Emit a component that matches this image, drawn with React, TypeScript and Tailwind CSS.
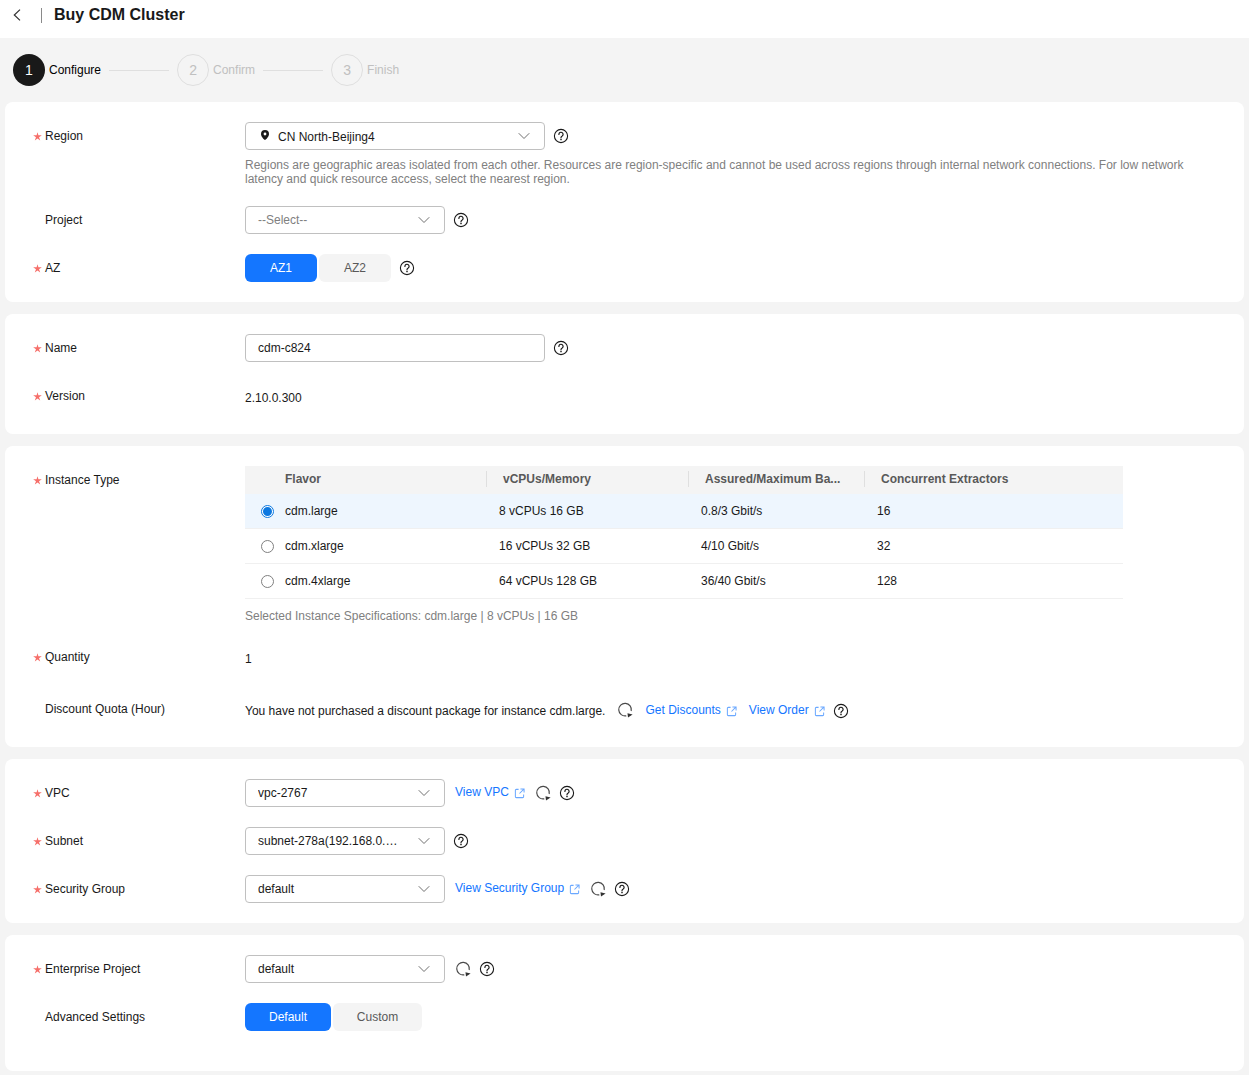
import type { ReactNode } from 'react';
import { ChevronDown } from 'lucide-react';

function Star() {
  return (
    <svg viewBox="0 0 10 10" className="mt-px h-[9px] w-[9px]" aria-hidden="true">
      <path d="M5 .2 6 3.700l3.800-.1-3.100 2.100 1.300 3.700L5 7.100 2 9.400l1.300-3.700L.2 3.600 4 3.700z" fill="#f66f6a" />
    </svg>
  );
}

function Help() {
  return (
    <svg viewBox="0 0 16 16" className="h-4 w-4 shrink-0" aria-hidden="true">
      <circle cx="8" cy="8" r="6.6" fill="none" stroke="#191919" strokeWidth="1.100" />
      <path d="M5.900 6.400a2.100 2.100 0 1 1 3.300 1.700c-.8.500-1.200.9-1.200 1.700" fill="none" stroke="#191919" strokeWidth="1.200" strokeLinecap="round" />
      <circle cx="8" cy="11.600" r=".8" fill="#191919" />
    </svg>
  );
}

function Refresh() {
  return (
    <svg viewBox="0 0 16 16" className="h-4 w-4 shrink-0" aria-hidden="true">
      <path d="M14.200 9A6.300 6.300 0 1 0 9.300 13.800" fill="none" stroke="#4a4a4a" strokeWidth="1.200" />
      <path d="M10.500 11.300 15.600 12.400 11 15.400z" fill="#333" />
    </svg>
  );
}

function ExternalIcon() {
  return (
    <svg viewBox="0 0 12 12" className="ml-[5px] mt-[2px] h-[11px] w-[11px] shrink-0" aria-hidden="true">
      <path d="M5 1.500H2.500a1 1 0 0 0-1 1v7a1 1 0 0 0 1 1h7a1 1 0 0 0 1-1V7M7 1h4v4M11 1 6 6" fill="none" stroke="#6aa8ff" strokeWidth="1.100" />
    </svg>
  );
}

function Pin() {
  return (
    <svg viewBox="0 0 12 12" className="h-3 w-3 shrink-0" aria-hidden="true">
      <path fillRule="evenodd" d="M6 1a4 4 0 0 0-4 4c0 2.500 3 5.700 4 6 1-.3 4-3.500 4-6a4 4 0 0 0-4-4zm0 2.600a1.400 1.400 0 1 1 0 2.800 1.400 1.400 0 0 1 0-2.800z" fill="#191919" />
    </svg>
  );
}

function Card({ children, className }: { children: ReactNode; className: string }) {
  return <section className={`mx-[5px] mb-3 rounded-lg bg-white pl-7 ${className}`}>{children}</section>;
}

function Row({ label, required, children, className = '', labelClass = 'pt-[6px]' }: { label: string; required?: boolean; children: ReactNode; className?: string; labelClass?: string }) {
  return (
    <div className={`flex ${className}`}>
      <div className={`flex h-fit w-[212px] shrink-0 items-center ${labelClass}`}>
        <span className="flex w-3 justify-start">{required && <Star />}</span>
        <span className="text-[#191919]">{label}</span>
      </div>
      <div className="min-w-0 flex-1">{children}</div>
    </div>
  );
}

function Select({ value, wide, muted, pin }: { value: string; wide?: boolean; muted?: boolean; pin?: boolean }) {
  return (
    <div className={`flex h-7 shrink-0 items-center rounded border border-[#c0c0c0] bg-white pr-[10px] ${wide ? 'w-[300px] pl-[13px]' : 'w-[200px] pl-3'}`}>
      {pin && <span className="mb-[2px] mr-[7px]"><Pin /></span>}
      <span className={`flex-1 truncate ${pin ? 'pt-[2px]' : ''} ${muted ? 'text-[#808080]' : 'text-[#191919]'}`}>{value}</span>
      <ChevronDown className="ml-[10px] h-5 w-5 shrink-0 text-[#707070]" strokeWidth={1.200} />
    </div>
  );
}

function Segment({ options, widths }: { options: string[]; widths: string[] }) {
  return (
    <div className="flex gap-[2px]">
      {options.map((option, i) => (
        <div key={option} className={`flex h-7 items-center justify-center rounded-md ${widths[i]} ${i === 0 ? 'bg-[#1476ff] text-white' : 'bg-[#f4f4f4] text-[#595959]'}`}>
          {option}
        </div>
      ))}
    </div>
  );
}

function Ext({ children, className = '' }: { children: ReactNode; className?: string }) {
  return (
    <span className={`flex items-center pb-[2px] text-[#1476ff] ${className}`}>
      {children}
      <ExternalIcon />
    </span>
  );
}

const steps = [
  { n: '1', label: 'Configure', active: true },
  { n: '2', label: 'Confirm' },
  { n: '3', label: 'Finish' },
];

const flavors = [
  ['cdm.large', '8 vCPUs 16 GB', '0.8/3 Gbit/s', '16'],
  ['cdm.xlarge', '16 vCPUs 32 GB', '4/10 Gbit/s', '32'],
  ['cdm.4xlarge', '64 vCPUs 128 GB', '36/40 Gbit/s', '128'],
];

export default function App() {
  return (
    <div className="min-h-screen bg-[#f4f4f4] font-['Liberation_Sans',Arial,sans-serif] text-xs">
      <header className="flex h-[38px] items-center bg-white pb-2 pl-[13px]">
        <svg viewBox="0 0 8 12" className="h-3 w-2" aria-hidden="true">
          <path d="M7 .6 1.300 6 7 11.400" fill="none" stroke="#333" strokeWidth="1.200" />
        </svg>
        <span className="ml-5 h-[15px] w-px bg-[#8a8a8a]" />
        <h1 className="ml-3 text-base font-bold text-[#191919]">Buy CDM Cluster</h1>
      </header>

      <div className="flex h-16 items-center pl-[13px]">
        {steps.map((step, i) => (
          <div key={step.n} className="flex items-center">
            <span className={`flex h-8 w-8 items-center justify-center rounded-full text-sm ${step.active ? 'bg-[#191919] text-white' : 'border border-[#dfdfdf] text-[#c0c0c0]'}`}>{step.n}</span>
            <span className={`ml-1 ${step.active ? 'text-black' : 'text-[#c0c0c0]'}`}>{step.label}</span>
            {i < 2 && <span className="mx-2 h-px w-[60px] bg-[#dfdfdf]" />}
          </div>
        ))}
      </div>

      <Card className="h-[200px] pt-5">
        <Row label="Region" required>
          <div className="flex items-center gap-2">
            <Select value="CN North-Beijing4" wide pin />
            <Help />
          </div>
          <p className="mt-2 w-[960px] leading-[14px] text-[#808080]">
            Regions are geographic areas isolated from each other. Resources are region-specific and cannot be used across regions through internal network connections. For low network latency and quick resource access, select the nearest region.
          </p>
        </Row>
        <Row label="Project" className="mt-5">
          <div className="flex items-center gap-2">
            <Select value="--Select--" muted />
            <Help />
          </div>
        </Row>
        <Row label="AZ" required className="mt-5">
          <div className="flex items-center gap-2">
            <Segment options={['AZ1', 'AZ2']} widths={['w-[72px]', 'w-[72px]']} />
            <Help />
          </div>
        </Row>
      </Card>

      <Card className="h-[120px] pt-5">
        <Row label="Name" required>
          <div className="flex items-center gap-2">
            <div className="flex h-7 w-[300px] items-center rounded border border-[#c0c0c0] pl-3 text-[#191919]">cdm-c824</div>
            <Help />
          </div>
        </Row>
        <Row label="Version" required className="mt-5">
          <div className="flex h-7 items-center pt-[3px] text-[#191919]">2.10.0.300</div>
        </Row>
      </Card>

      <Card className="h-[301px] pt-5">
        <Row label="Instance Type" required>
          <div className="w-[878px]">
            <div className="grid h-7 grid-cols-[40px_201px_202px_176px_1fr] items-center bg-[#f4f4f4] pb-[2px] font-bold text-[#595959]">
              <span />
              <span className="truncate">Flavor</span>
              <span className="flex h-4 items-center border-l border-[#dfdfdf] pl-4">vCPUs/Memory</span>
              <span className="flex h-4 items-center border-l border-[#dfdfdf] pl-4">Assured/Maximum Ba...</span>
              <span className="flex h-4 items-center border-l border-[#dfdfdf] pl-4">Concurrent Extractors</span>
            </div>
            {flavors.map((flavor, i) => (
              <div key={flavor[0]} className={`grid h-[35px] grid-cols-[40px_202px_202px_176px_1fr] items-center border-b border-[#f0f0f0] text-[#191919] ${i === 0 ? 'bg-[#eef6fe]' : ''}`}>
                <span className="flex justify-center pl-[5px]">
                  {i === 0 ? (
                    <span className="flex h-[13px] w-[13px] items-center justify-center rounded-full border border-[#0c78e0] bg-white">
                      <span className="h-[9px] w-[9px] rounded-full bg-[#0c78e0]" />
                    </span>
                  ) : (
                    <span className="h-[13px] w-[13px] rounded-full border border-[#808080] bg-white" />
                  )}
                </span>
                <span>{flavor[0]}</span>
                <span className="pl-3">{flavor[1]}</span>
                <span className="pl-3">{flavor[2]}</span>
                <span className="pl-3">{flavor[3]}</span>
              </div>
            ))}
            <p className="mt-[9px] text-[#808080]">Selected Instance Specifications: cdm.large | 8 vCPUs | 16 GB</p>
          </div>
        </Row>
        <Row label="Quantity" required className="mt-[25px]" labelClass="">
          <div className="pt-[2px] text-[#191919]">1</div>
        </Row>
        <Row label="Discount Quota (Hour)" className="mt-[34px]" labelClass="">
          <div className="flex items-center pt-px text-[#191919]">
            <span>You have not purchased a discount package for instance cdm.large.</span>
            <span className="ml-3 -mt-[2px]"><Refresh /></span>
            <Ext className="ml-3">Get Discounts</Ext>
            <Ext className="ml-3">View Order</Ext>
            <span className="ml-2"><Help /></span>
          </div>
        </Row>
      </Card>

      <Card className="h-[164px] pt-5">
        <Row label="VPC" required>
          <div className="flex items-center">
            <Select value="vpc-2767" />
            <Ext className="ml-[10px]">View VPC</Ext>
            <span className="ml-[10px]"><Refresh /></span>
            <span className="ml-2"><Help /></span>
          </div>
        </Row>
        <Row label="Subnet" required className="mt-5">
          <div className="flex items-center gap-2">
            <Select value="subnet-278a(192.168.0.0/24)" />
            <Help />
          </div>
        </Row>
        <Row label="Security Group" required className="mt-5">
          <div className="flex items-center">
            <Select value="default" />
            <Ext className="ml-[10px]">View Security Group</Ext>
            <span className="ml-[10px]"><Refresh /></span>
            <span className="ml-2"><Help /></span>
          </div>
        </Row>
      </Card>

      <Card className="mb-0 h-[136px] pt-5">
        <Row label="Enterprise Project" required>
          <div className="flex items-center">
            <Select value="default" />
            <span className="ml-[10px]"><Refresh /></span>
            <span className="ml-2"><Help /></span>
          </div>
        </Row>
        <Row label="Advanced Settings" className="mt-5">
          <Segment options={['Default', 'Custom']} widths={['w-[86px]', 'w-[89px]']} />
        </Row>
      </Card>
    </div>
  );
}
